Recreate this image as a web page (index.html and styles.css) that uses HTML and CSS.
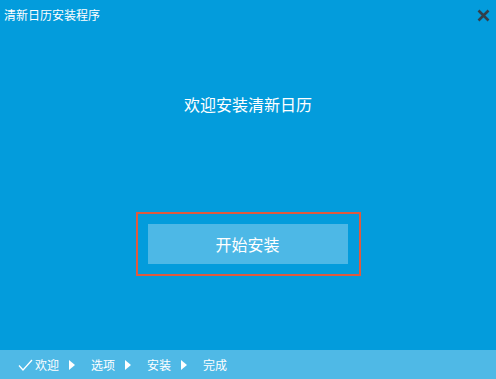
FILE: index.html
```html
<!DOCTYPE html>
<html lang="zh-CN">
<head>
    <meta charset="UTF-8">
    <title>清新日历安装程序</title>
    <link rel="stylesheet" href="styles.css">
</head>
<body>
    <div class="window">
        <div class="titlebar">
            <span class="title">清新日历安装程序</span>
            <svg class="close" width="13" height="13" viewBox="0 0 13 13">
                <path d="M1.5 1.5 L11.5 11.5 M11.5 1.5 L1.5 11.5" stroke="#333f4a" stroke-width="2.6" fill="none"/>
            </svg>
        </div>

        <div class="content">
            <div class="welcome">欢迎安装清新日历</div>
            <div class="frame">
                <button class="btn">开始安装</button>
            </div>
        </div>

        <div class="steps">
            <svg class="check" width="15" height="12" viewBox="0 0 15 12">
                <path d="M1 6.5 L5 11 L14 1" stroke="#fff" stroke-width="1.3" fill="none"/>
            </svg>
            <span class="step">欢迎</span>
            <span class="arrow"></span>
            <span class="step">选项</span>
            <span class="arrow"></span>
            <span class="step">安装</span>
            <span class="arrow"></span>
            <span class="step">完成</span>
        </div>
    </div>
</body>
</html>
```

FILE: styles.css
```css
body {
    margin: 0;
    font-family: "Noto Sans CJK SC", "Noto Sans", sans-serif;
    color: #fff;
}

.window {
    width: 496px;
    height: 379px;
    display: flex;
    flex-direction: column;
    background-color: #039cdc;
}

.titlebar {
    height: 30px;
    display: flex;
    align-items: center;
    justify-content: space-between;
    padding: 0 6px 0 4px;
}

.title {
    font-size: 12px;
    line-height: 14px;
}

.content {
    flex: 1;
    display: flex;
    flex-direction: column;
    align-items: center;
}

.welcome {
    margin-top: 63px;
    font-size: 16px;
    line-height: 22px;
}

.frame {
    margin-top: 97px;
    border: 2px solid #e05a3e;
    padding: 10px 11px 10px 10px;
}

.btn {
    display: block;
    width: 200px;
    height: 40px;
    border: none;
    background-color: #4db8e6;
    color: #fff;
    font-family: inherit;
    font-size: 16px;
    cursor: pointer;
}

.steps {
    height: 29px;
    display: flex;
    align-items: center;
    padding-left: 18px;
    background-color: #4fb9e6;
    font-size: 12px;
}

.check {
    margin-right: 2px;
}

.arrow {
    width: 0;
    height: 0;
    border-top: 5px solid transparent;
    border-bottom: 5px solid transparent;
    border-left: 6px solid #fff;
    margin: 0 16px 0 10px;
}
```
